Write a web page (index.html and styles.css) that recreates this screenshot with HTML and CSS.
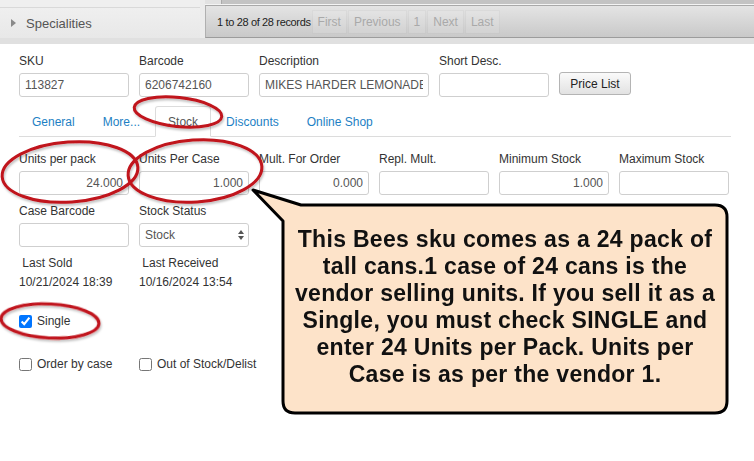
FILE: index.html
```html
<!DOCTYPE html>
<html>
<head>
<meta charset="utf-8">
<link rel="stylesheet" href="styles.css">
</head>
<body>
<div class="page">
  <div class="header">
    <div class="side">
      <div class="side-top"></div>
      <div class="side-row"><span class="tri"></span>Specialities</div>
    </div>
    <div class="gap"></div>
    <div class="main-head">
      <div class="head-strip"><span class="notch"></span></div>
      <div class="pager">
        <span class="records">1 to 28 of 28 records</span>
        <span class="pbtn">First</span>
        <span class="pbtn">Previous</span>
        <span class="pbtn">1</span>
        <span class="pbtn">Next</span>
        <span class="pbtn">Last</span>
      </div>
    </div>
  </div>
  <div class="band"></div>

  <div class="form">
    <div class="row row1">
      <div class="field"><label class="lbl">SKU</label><input class="inp" value="113827"></div>
      <div class="field"><label class="lbl">Barcode</label><input class="inp" value="6206742160"></div>
      <div class="field wide"><label class="lbl">Description</label><input class="inp" value="MIKES HARDER LEMONADE"></div>
      <div class="field"><label class="lbl">Short Desc.</label><input class="inp" value=""></div>
      <button class="btn">Price List</button>
    </div>

    <ul class="tabs">
      <li class="tab">General</li>
      <li class="tab">More...</li>
      <li class="tab active">Stock</li>
      <li class="tab">Discounts</li>
      <li class="tab">Online Shop</li>
    </ul>

    <div class="row row2">
      <div class="field"><label class="lbl">Units per pack</label><input class="inp num" value="24.000"></div>
      <div class="field"><label class="lbl">Units Per Case</label><input class="inp num" value="1.000"></div>
      <div class="field"><label class="lbl">Mult. For Order</label><input class="inp num" value="0.000"></div>
      <div class="field"><label class="lbl">Repl. Mult.</label><input class="inp num" value=""></div>
      <div class="field"><label class="lbl">Minimum Stock</label><input class="inp num" value="1.000"></div>
      <div class="field"><label class="lbl">Maximum Stock</label><input class="inp num" value=""></div>
    </div>

    <div class="row row3">
      <div class="field"><label class="lbl">Case Barcode</label><input class="inp" value=""></div>
      <div class="field"><label class="lbl">Stock Status</label>
        <div class="select"><span>Stock</span>
          <svg class="sel-arrows" width="6" height="10" viewBox="0 0 6 10"><path d="M3 0 L6 4 L0 4 Z M0 6 L6 6 L3 10 Z" fill="#555"/></svg>
        </div>
      </div>
    </div>

    <div class="row row4">
      <div class="info"><div>&nbsp;Last Sold</div><div>10/21/2024 18:39</div></div>
      <div class="info"><div>&nbsp;Last Received</div><div>10/16/2024 13:54</div></div>
    </div>

    <div class="row single">
      <label class="chk"><input type="checkbox" checked><span>Single</span></label>
    </div>

    <div class="row checks">
      <label class="chk"><input type="checkbox"><span>Order by case</span></label>
      <label class="chk"><input type="checkbox"><span>Out of Stock/Delist</span></label>
    </div>
  </div>

  <svg class="overlay" width="754" height="461" viewBox="0 0 754 461">
    <defs>
      <filter id="sh" x="-20%" y="-20%" width="140%" height="150%">
        <feDropShadow dx="1" dy="2" stdDeviation="1.2" flood-color="#000" flood-opacity="0.25"/>
      </filter>
    </defs>
    <g fill="none" stroke="#c0121b" stroke-width="3" filter="url(#sh)">
      <ellipse cx="70" cy="172" rx="68" ry="30" transform="rotate(-4 70 172)"/>
      <ellipse cx="195" cy="171" rx="67" ry="31" transform="rotate(-4 195 171)"/>
      <ellipse cx="178" cy="112" rx="44" ry="14.5" transform="rotate(6 178 112)"/>
      <ellipse cx="50" cy="321" rx="49" ry="17" transform="rotate(3 50 321)"/>
    </g>
    <path d="M253 190 L301 205 L715 205 Q727 205 727 217 L727 401 Q727 413 715 413 L295 413 Q283 413 283 401 L283 221 Z"
          fill="#fde3c9" stroke="#000" stroke-width="3" stroke-linejoin="round"/>
  </svg>
  <div class="callout-text">This Bees sku comes as a 24 pack of<br>tall cans.1 case of 24 cans is the<br>vendor selling units. If you sell it as a<br>Single, you must check SINGLE and<br>enter 24 Units per Pack. Units per<br>Case is as per the vendor 1.</div>
</div>
</body>
</html>
```

FILE: styles.css
```css
* { box-sizing: border-box; }
html, body { margin: 0; padding: 0; background: #fff; }
body { font-family: "Liberation Sans", Arial, sans-serif; font-size: 12px; color: #333; }
.page { position: relative; width: 754px; height: 461px; overflow: hidden; }

.header { display: flex; height: 38px; }
.side { width: 200px; display: flex; flex-direction: column; }
.side-top { height: 8px; background: #efefef; border-bottom: 1px solid #d9d9d9; }
.side-row { flex: 1; display: flex; align-items: center; padding-left: 11px; background: linear-gradient(#efefef, #e8e8e8); color: #555; font-size: 13px; }
.tri { width: 0; height: 0; border-left: 5px solid #8a8a8a; border-top: 4px solid transparent; border-bottom: 4px solid transparent; margin-right: 10px; }
.gap { width: 5px; background: #ececec; }
.main-head { flex: 1; display: flex; flex-direction: column; }
.head-strip { height: 5px; background: #c3c3c3; border-bottom: 1px solid #f4f4f4; position: relative; }
.notch { display: block; width: 17px; height: 4px; background: #e2e2e2; border-right: 1px solid #aaa; }
.pager { flex: 1; display: flex; align-items: center; padding-left: 11px; background: linear-gradient(#e4e4e4, #c9c9c9); border-top: 1px solid #a9a9a9; border-bottom: 1px solid #9c9c9c; border-left: 1px solid #b0b0b0; }
.records { font-size: 11px; color: #222; margin-right: 1px; letter-spacing: -0.35px; }
.pbtn { font-size: 12px; color: #a9a9a9; padding: 4px 5px; margin-right: 1px; background: rgba(255,255,255,0.12); border: 1px solid rgba(0,0,0,0.04); }

.band { height: 6px; background: #e0e0e0; }

.form { padding: 10px 0 0 19px; }
.row { display: flex; gap: 10px; }
.field { width: 110px; display: flex; flex-direction: column; }
.field.wide { width: 170px; }
.lbl { display: block; line-height: 14px; margin-bottom: 5px; color: #333; white-space: nowrap; }
.inp { width: 100%; height: 24px; border: 1px solid #cfcfcf; border-radius: 3px; padding: 0 5px; font-family: inherit; font-size: 12px; color: #555; background: #fff; outline: none; }
.inp.num { text-align: right; }
.btn { align-self: flex-end; margin-bottom: 2px; width: 72px; height: 23px; border: 1px solid #b4b4b4; border-radius: 3px; background: linear-gradient(#fafafa, #e2e2e2); font-family: inherit; font-size: 12px; color: #222; padding: 0; }

.tabs { list-style: none; margin: 9px 0 0 0; padding: 0; width: 712px; display: flex; border-bottom: 1px solid #dcdcdc; }
.tab { height: 31px; line-height: 30px; padding: 0 12px; margin-right: 2px; margin-bottom: -1px; color: #1d7fc4; border: 1px solid transparent; font-size: 12px; }
.tab.active { color: #555; border-color: #dcdcdc #dcdcdc #fff; border-radius: 3px 3px 0 0; background: #fff; }

.row2 { margin-top: 15px; }
.row3 { margin-top: 9px; }
.select { height: 24px; border: 1px solid #cfcfcf; border-radius: 3px; display: flex; align-items: center; justify-content: space-between; padding: 0 4px 0 5px; color: #555; }
.row4 { margin-top: 7px; gap: 10px; }
.info { width: 110px; line-height: 19px; white-space: nowrap; }
.single { margin-top: 21px; height: 16px; align-items: center; }
.checks { margin-top: 27px; height: 16px; align-items: center; }
.chk { width: 110px; display: flex; align-items: center; gap: 5px; white-space: nowrap; }
.chk input { margin: 0; width: 13px; height: 13px; }

.overlay { position: absolute; left: 0; top: 0; pointer-events: none; }
.callout-text { position: absolute; left: 283px; top: 226px; width: 444px; text-align: center; font-family: "Liberation Sans", Arial, sans-serif; font-weight: bold; font-size: 23px; line-height: 27px; letter-spacing: 0.3px; color: #111; white-space: nowrap; }
```
